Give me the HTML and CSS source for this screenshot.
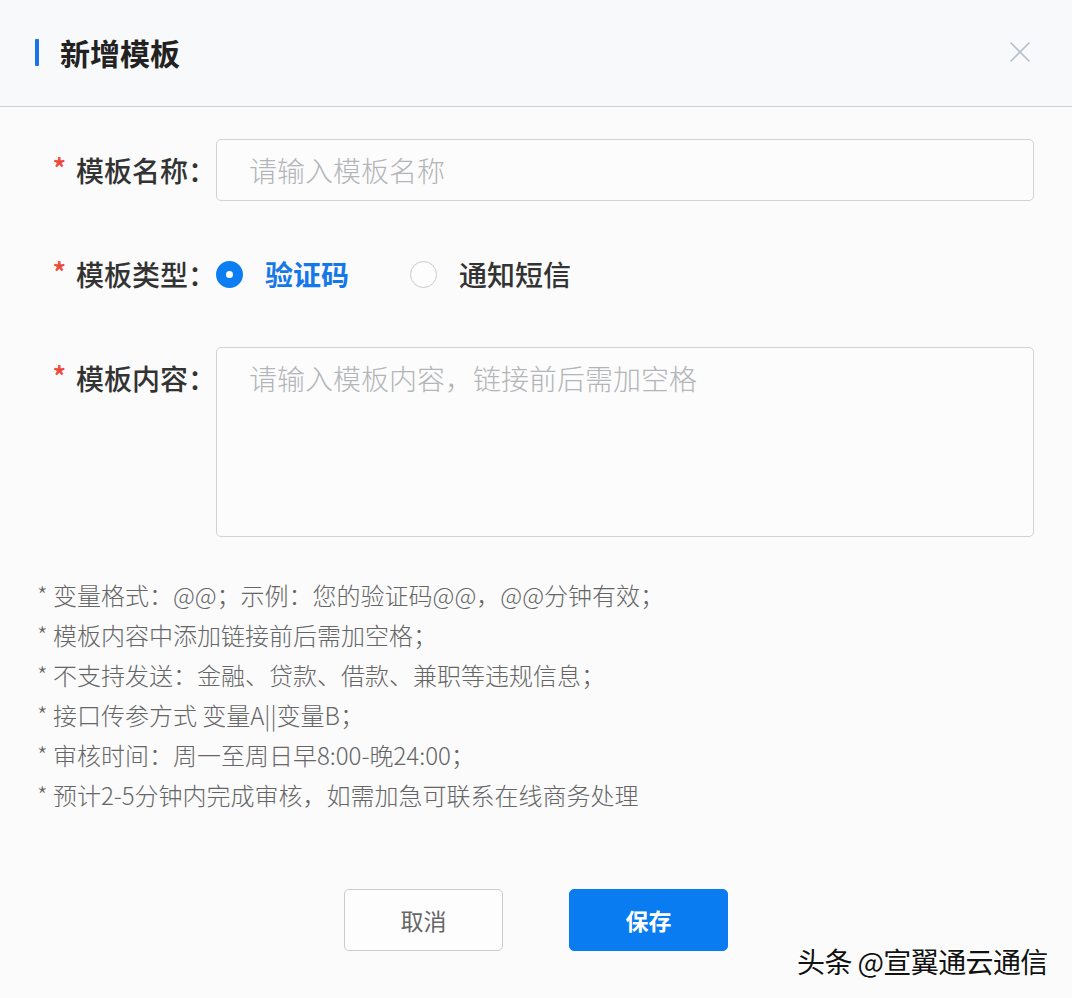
FILE: index.html
```html
<!DOCTYPE html>
<html lang="zh-CN">
<head>
<meta charset="utf-8">
<title>新增模板</title>
<link rel="stylesheet" href="styles.css">
</head>
<body>
<div class="dialog">
  <div class="header">
    <span class="bar"></span>
    <h1 class="title">新增模板</h1>
    <svg class="close" width="20" height="20" viewBox="0 0 20 20" aria-hidden="true">
      <path d="M1 1 L19 19 M19 1 L1 19" stroke="#b7bfcb" stroke-width="1.6" fill="none" stroke-linecap="round"/>
    </svg>
  </div>

  <div class="form">
    <div class="row row-name">
      <label class="label"><span class="req">*</span>模板名称：</label>
      <input class="input" type="text" placeholder="请输入模板名称">
    </div>

    <div class="row row-type">
      <label class="label"><span class="req">*</span>模板类型：</label>
      <div class="radios">
        <span class="radio checked"><span class="dot"></span><span class="rtext">验证码</span></span>
        <span class="radio"><span class="dot"></span><span class="rtext">通知短信</span></span>
      </div>
    </div>

    <div class="row row-content">
      <label class="label"><span class="req">*</span>模板内容：</label>
      <textarea class="textarea" placeholder="请输入模板内容，链接前后需加空格"></textarea>
    </div>

    <ul class="notes">
      <li>* 变量格式：@@；示例：您的验证码@@，@@分钟有效；</li>
      <li>* 模板内容中添加链接前后需加空格；</li>
      <li>* 不支持发送：金融、贷款、借款、兼职等违规信息；</li>
      <li>* 接口传参方式 变量A||变量B；</li>
      <li>* 审核时间：周一至周日早8:00-晚24:00；</li>
      <li>* 预计2-5分钟内完成审核，如需加急可联系在线商务处理</li>
    </ul>

    <div class="actions">
      <button class="btn btn-cancel" type="button">取消</button>
      <button class="btn btn-save" type="button">保存</button>
    </div>
  </div>

  <div class="watermark">头条 @宣翼通云通信</div>
</div>
</body>
</html>
```

FILE: styles.css
```css
* { box-sizing: border-box; }

html, body {
  margin: 0;
  padding: 0;
  background: #fbfbfc;
}

body {
  font-family: "Noto Sans CJK SC", "Noto Sans", "Liberation Sans", sans-serif;
  color: #333;
}

.dialog {
  position: relative;
  width: 1072px;
  height: 998px;
  background: #fbfbfc;
  overflow: hidden;
}

.header {
  height: 107px;
  display: flex;
  align-items: center;
  padding: 0 42px 2px 35px;
  background: #f8f9fa;
  border-bottom: 1px solid #c6cfd9;
}

.bar {
  width: 4px;
  height: 27px;
  background: #1a73e8;
  border-radius: 1px;
}

.title {
  margin: 0 0 0 21px;
  font-size: 30px;
  font-weight: 700;
  color: #222;
  line-height: 1;
}

.close {
  margin-left: auto;
}

.form {
  padding: 32px 38px 0 0;
}

.row {
  display: grid;
  grid-template-columns: 216px 818px;
  align-items: start;
}

.label {
  display: flex;
  justify-content: flex-end;
  align-items: center;
  height: 62px;
  font-size: 28px;
  font-weight: 500;
  color: #333;
  white-space: nowrap;
}

.req {
  color: #ee4a3c;
  font-size: 26px;
  font-weight: 700;
  margin-right: 10px;
  position: relative;
  top: -4px;
}

.input {
  height: 62px;
  width: 818px;
  border: 1px solid #cfd2d6;
  border-radius: 5px;
  background: #fcfcfd;
  padding: 0 20px 0 32px;
  font: inherit;
  font-size: 28px;
  font-weight: 300;
  color: #333;
  outline: none;
}

.input::placeholder,
.textarea::placeholder {
  color: #b3b5b8;
}

.row-type {
  margin-top: 42px;
}

.radios {
  display: flex;
  align-items: center;
  height: 62px;
}

.radio {
  display: flex;
  align-items: center;
  margin-right: 61px;
}

.dot {
  width: 27px;
  height: 27px;
  border-radius: 50%;
  border: 1px solid #c9cbcf;
  background: #fdfdfd;
}

.radio.checked .dot {
  border: 10px solid #0d7ef2;
  background: #fff;
}

.rtext {
  margin-left: 22px;
  font-size: 28px;
  font-weight: 500;
  color: #333;
}

.radio.checked .rtext {
  color: #1677e8;
  font-weight: 700;
}

.row-content {
  margin-top: 42px;
}

.textarea {
  display: block;
  width: 818px;
  height: 190px;
  border: 1px solid #cfd2d6;
  border-radius: 5px;
  background: #fcfcfd;
  padding: 10px 20px 0 32px;
  font: inherit;
  font-size: 28px;
  font-weight: 300;
  line-height: 40px;
  color: #333;
  resize: none;
  outline: none;
}

.notes {
  list-style: none;
  margin: 38px 0 0 0;
  padding: 0 0 0 37px;
  font-size: 24px;
  font-weight: 300;
  line-height: 40px;
  color: #666;
}

.notes li {
  white-space: nowrap;
}

.actions {
  display: flex;
  justify-content: center;
  gap: 66px;
  margin-top: 74px;
  padding-left: 38px;
}

.btn {
  width: 159px;
  height: 62px;
  border-radius: 5px;
  font: inherit;
  font-size: 23px;
  cursor: pointer;
}

.btn-cancel {
  background: #fdfdfd;
  border: 1px solid #c9cbcf;
  color: #666;
}

.btn-save {
  background: #0a7cf2;
  border: 1px solid #0a7cf2;
  color: #fff;
  font-weight: 700;
}

.watermark {
  position: absolute;
  left: 797px;
  top: 941px;
  font-size: 28px;
  color: #111;
  letter-spacing: -0.6px;
  white-space: nowrap;
  text-shadow: 1px 1px 0 #fff, -1px -1px 0 #fff, 1px -1px 0 #fff, -1px 1px 0 #fff;
}
```
